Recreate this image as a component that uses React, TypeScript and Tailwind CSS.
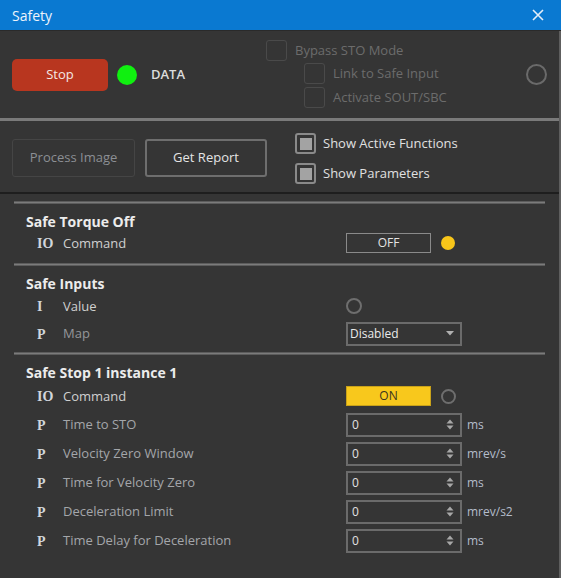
import React from 'react';

const font = { fontFamily: '"Open Sans", "Noto Sans", sans-serif' };

const Check = ({ on, dim }: { on?: boolean; dim?: boolean }) => (
  <div
    className={`w-[21px] h-[21px] rounded-[3px] border flex items-center justify-center shrink-0 ${
      dim ? 'border-[#4a4a4a]' : 'border-[#8a8a8a] border-2'
    }`}
  >
    {on && <div className="w-[12px] h-[12px] bg-[#a3a3a3]" />}
  </div>
);

const Spinner = () => (
  <svg width="8" height="13" viewBox="0 0 8 13" className="shrink-0">
    <path d="M0.5 5.5 L4 1.5 L7.5 5.5 Z" fill="#a8a8a8" />
    <path d="M0.5 7.5 L4 11.5 L7.5 7.5 Z" fill="#a8a8a8" />
  </svg>
);

const Letter = ({ t }: { t: string }) => (
  <div className="w-[26px] shrink-0 text-[14px] font-bold text-[#d2d6dc] mt-[1px]" style={{ fontFamily: '"Liberation Serif", serif' }}>
    {t}
  </div>
);

const ParamRow = ({ label, unit }: { label: string; unit: string }) => (
  <div className="h-[29px] flex items-center pl-[37px]">
    <Letter t="P" />
    <div className="w-[283px] text-[13px] text-[#a4a6aa] mt-[1px]">{label}</div>
    <div className="w-[116px] h-[24px] border-2 border-[#6b6b6b] flex items-center justify-between pl-[4px] pr-[6px]">
      <span className="text-[12px] text-[#e2e2e2]">0</span>
      <Spinner />
    </div>
    <span className="ml-[5px] text-[12px] text-[#b4bccb]">{unit}</span>
  </div>
);

const Divider = () => <div className="mx-[14px] h-[3px] bg-[#7b7b7b] border-y border-[#5c5c5c]" />;

const Title = ({ children }: { children: React.ReactNode }) => (
  <div className="h-[27px] pt-[8px] pl-[26px] text-[14px] leading-[20px] font-bold text-[#ececec]">{children}</div>
);

export default function App() {
  return (
    <div className="w-[561px] h-[578px] bg-[#353535] flex flex-col overflow-hidden" style={font}>
      {/* title bar */}
      <div className="h-[30px] bg-[#0a79d1] flex items-center justify-between pl-[12px] pr-[17px] shrink-0">
        <span className="text-[14px] text-[#eef4fb]">Safety</span>
        <svg width="12" height="12" viewBox="0 0 12 12">
          <path d="M1 1 L11 11 M11 1 L1 11" stroke="#e6eef8" strokeWidth="1.6" />
        </svg>
      </div>
      <div className="h-[1px] bg-[#2a2a2a] shrink-0" />

      <div className="flex-1 flex flex-col border-r-2 border-[#5e5e5e]">
        {/* top controls */}
        <div className="h-[87px] flex shrink-0">
          <div className="w-[266px] flex items-center pl-[12px]">
            <button className="w-[96px] h-[32px] rounded-[5px] bg-[#b8361f] text-[13px] text-[#f4e8e6]">Stop</button>
            <div className="ml-[9px] w-[20px] h-[20px] rounded-full bg-[#10f010]" />
            <span className="ml-[14px] text-[13px] font-semibold text-[#dcdcdc]">DATA</span>
          </div>
          <div className="pt-[9px] flex flex-col">
            <div className="flex items-center gap-[8px] h-[21px]">
              <Check dim />
              <span className="text-[13px] text-[#6c6c6c] mt-[1px]">Bypass STO Mode</span>
            </div>
            <div className="flex items-center gap-[8px] h-[21px] ml-[38px] mt-[2px]">
              <Check dim />
              <span className="text-[13px] text-[#6c6c6c] mt-[1px]">Link to Safe Input</span>
            </div>
            <div className="flex items-center gap-[8px] h-[21px] ml-[38px] mt-[3px]">
              <Check dim />
              <span className="text-[13px] text-[#6c6c6c] mt-[1px]">Activate SOUT/SBC</span>
            </div>
          </div>
          <div className="ml-auto mr-[12px] flex items-center">
            <div className="w-[21px] h-[21px] rounded-full border-2 border-[#6a6a6a]" />
          </div>
        </div>

        <div className="h-[3px] bg-[#7a7a7a] shrink-0" />

        {/* second controls */}
        <div className="h-[71px] flex shrink-0">
          <div className="flex items-start pt-[18px] pl-[12px] gap-[10px]">
            <button className="w-[123px] h-[38px] rounded-[3px] border border-[#454545] text-[13px] text-[#8c8f94]">Process Image</button>
            <button className="w-[122px] h-[38px] rounded-[3px] border-2 border-[#6e6e6e] text-[13px] text-[#e4e4e4]">Get Report</button>
          </div>
          <div className="ml-[28px] pt-[12px] flex flex-col gap-[9px]">
            <div className="flex items-center gap-[7px] h-[21px]">
              <Check on />
              <span className="text-[13px] text-[#e0e0e0]">Show Active Functions</span>
            </div>
            <div className="flex items-center gap-[7px] h-[21px]">
              <Check on />
              <span className="text-[13px] text-[#e0e0e0]">Show Parameters</span>
            </div>
          </div>
        </div>

        <div className="h-[2px] bg-[#1e1e1e] shrink-0" />

        {/* function list */}
        <div className="pt-[7px] flex flex-col">
          <Divider />
          <Title>Safe Torque Off</Title>
          <div className="h-[24px] flex items-center pl-[37px]">
            <Letter t="IO" />
            <div className="w-[283px] text-[13px] text-[#d0d0d0] mt-[1px]">Command</div>
            <div className="w-[85px] h-[20px] border border-[#8a8a8a] flex items-center justify-center text-[12px] text-[#e4e4e4]">OFF</div>
            <div className="ml-[10px] w-[14px] h-[14px] rounded-full bg-[#f8c61a]" />
          </div>
          <div className="h-[8px]" />
          <Divider />

          <Title>Safe Inputs</Title>
          <div className="h-[26px] flex items-center pl-[37px]">
            <Letter t="I" />
            <div className="w-[283px] text-[13px] text-[#d0d0d0] mt-[1px]">Value</div>
            <div className="w-[16px] h-[16px] rounded-full border-2 border-[#6e6e6e]" />
          </div>
          <div className="h-[29px] flex items-center pl-[37px]">
            <Letter t="P" />
            <div className="w-[283px] text-[13px] text-[#94969a] mt-[1px]">Map</div>
            <div className="w-[116px] h-[24px] border-2 border-[#6b6b6b] flex items-center justify-between pl-[2px] pr-[6px]">
              <span className="text-[12px] text-[#eaeaea]">Disabled</span>
              <svg width="8" height="5" viewBox="0 0 8 5">
                <path d="M0 0 L8 0 L4 4.5 Z" fill="#b0b0b0" />
              </svg>
            </div>
          </div>
          <div className="h-[4px]" />
          <Divider />

          <Title>Safe Stop 1 instance 1</Title>
          <div className="h-[28px] flex items-center pl-[37px]">
            <Letter t="IO" />
            <div className="w-[283px] text-[13px] text-[#d0d0d0] mt-[1px]">Command</div>
            <div className="w-[85px] h-[20px] border border-[#c9a21a] bg-[#f8c81c] flex items-center justify-center text-[12px] text-[#3a3420]">ON</div>
            <div className="ml-[10px] w-[15px] h-[15px] rounded-full border-2 border-[#6e6e6e]" />
          </div>
          <ParamRow label="Time to STO" unit="ms" />
          <ParamRow label="Velocity Zero Window" unit="mrev/s" />
          <ParamRow label="Time for Velocity Zero" unit="ms" />
          <ParamRow label="Deceleration Limit" unit="mrev/s2" />
          <ParamRow label="Time Delay for Deceleration" unit="ms" />
        </div>
      </div>
    </div>
  );
}
